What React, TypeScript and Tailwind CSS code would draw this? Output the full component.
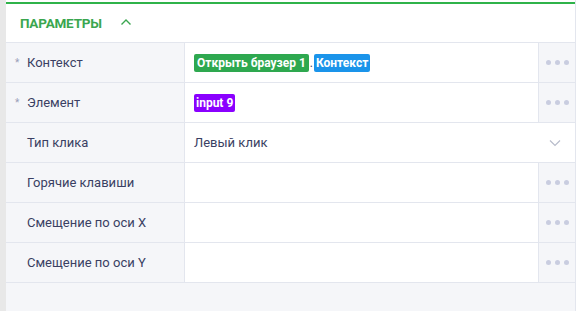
import React from "react";

const Dots = () => (
  <div className="w-[37px] flex items-center justify-center gap-[4px] bg-[#f5f6f9] border-l border-[#e3e6ee]">
    <span className="w-[5px] h-[5px] rounded-full bg-[#c9cde0]" />
    <span className="w-[5px] h-[5px] rounded-full bg-[#c9cde0]" />
    <span className="w-[5px] h-[5px] rounded-full bg-[#c9cde0]" />
  </div>
);

function Row({ label, required, children, select }: { label: string; required?: boolean; children?: React.ReactNode; select?: boolean }) {
  return (
    <div className="flex h-[40px] border-b border-[#e3e6ee]">
      <div className="w-[179px] flex items-center bg-[#f5f6f9] border-r border-[#e3e6ee] text-[13px] text-[#3a3f63]">
        <span className="w-[21px] pl-[9px] text-[#9aa0b8] text-[10px]">{required ? "*" : ""}</span>
        <span>{label}</span>
      </div>
      <div className="flex-1 flex items-center bg-white pl-[9px] pr-[12px] text-[13px] text-[#3a3f63]">
        <div className="flex-1 flex items-center">{children}</div>
        {select && (
          <svg width="12" height="8" viewBox="0 0 12 8" className="mr-[2px]">
            <path d="M1 1.5 L6 6.5 L11 1.5" fill="none" stroke="#b8bccb" strokeWidth="1.2" />
          </svg>
        )}
      </div>
      {!select && <Dots />}
    </div>
  );
}

export default function App() {
  return (
    <div className="w-[576px] h-[311px] flex bg-[#e8e8e8]" style={{ fontFamily: "Roboto, 'Noto Sans', sans-serif" }}>
      <div className="w-[6px]" />
      <div className="flex-1 flex flex-col bg-[#f5f6f9] border-r border-[#e3e6ee]">
        <div className="h-[2px] bg-white" />
        <div className="h-[2px] bg-[#2fb34a]" />
        <div className="h-[39px] bg-white flex items-center pl-[14px] border-b border-[#e3e6ee]">
          <span className="text-[13.5px] font-bold text-[#3aa64f] tracking-[-0.2px]">ПАРАМЕТРЫ</span>
          <svg width="12" height="8" viewBox="0 0 12 8" className="ml-[18px] mb-[3px]">
            <path d="M1.5 6.5 L6 2 L10.5 6.5" fill="none" stroke="#3aa64f" strokeWidth="1.4" />
          </svg>
        </div>
        <Row label="Контекст" required>
          <span className="bg-[#2ea84f] text-white font-bold text-[12px] leading-[18px] px-[3px] rounded-[2px]">Открыть браузер 1</span>
          <span className="text-[#3a3f63] text-[12px] leading-[18px] mx-[1px]">.</span>
          <span className="bg-[#1a94ea] text-white font-bold text-[12px] leading-[18px] px-[2px] rounded-[2px]">Контекст</span>
        </Row>
        <Row label="Элемент" required>
          <span className="bg-[#8a00ff] text-white font-bold text-[12px] leading-[18px] px-[2px] rounded-[2px]">input 9</span>
        </Row>
        <Row label="Тип клика" select>
          <span>Левый клик</span>
        </Row>
        <Row label="Горячие клавиши" />
        <Row label="Смещение по оси X" />
        <Row label="Смещение по оси Y" />
        <div className="flex-1" />
      </div>
    </div>
  );
}
